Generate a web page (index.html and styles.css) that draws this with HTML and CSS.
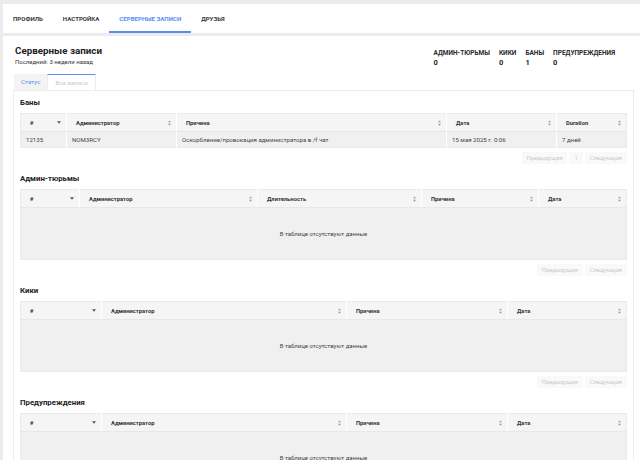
FILE: index.html
```html
<!DOCTYPE html>
<html lang="ru">
<head>
    <meta charset="UTF-8">
    <meta name="viewport" content="width=device-width, initial-scale=1.0">
    <title>Серверные записи</title>
    <link rel="stylesheet" href="styles.css">
</head>
<body>
    <nav class="nav">
        <a href="#">ПРОФИЛЬ</a>
        <a href="#">НАСТРОЙКА</a>
        <a href="#" class="active">СЕРВЕРНЫЕ ЗАПИСИ</a>
        <a href="#">ДРУЗЬЯ</a>
    </nav>

    <div class="card">
        <div class="head">
            <div class="title">
                <h1>Серверные записи</h1>
                <p>Последний: 3 недели назад</p>
            </div>
            <div class="stats">
                <div class="stat"><span class="stat-label">АДМИН-ТЮРЬМЫ</span><span class="stat-value">0</span></div>
                <div class="stat"><span class="stat-label">КИКИ</span><span class="stat-value">0</span></div>
                <div class="stat"><span class="stat-label">БАНЫ</span><span class="stat-value">1</span></div>
                <div class="stat"><span class="stat-label">ПРЕДУПРЕЖДЕНИЯ</span><span class="stat-value">0</span></div>
            </div>
        </div>

        <div class="tabs">
            <div class="tab tab-status">Статус</div>
            <div class="tab tab-all">Все записи</div>
        </div>

        <div class="panel">
            <section class="section">
                <h2>Баны</h2>
                <table class="grid bans">
                    <colgroup><col><col><col><col><col></colgroup>
                    <thead>
                        <tr>
                            <th><div class="th"><span>#</span><svg class="desc" viewBox="0 0 5 3"><path d="M0 0H5L2.5 3z"/></svg></div></th>
                            <th><div class="th"><span>Администратор</span><svg class="sort" viewBox="0 0 4 7"><path d="M2 0L4 2.6H0zM2 7L0 4.4H4z"/></svg></div></th>
                            <th><div class="th"><span>Причина</span><svg class="sort" viewBox="0 0 4 7"><path d="M2 0L4 2.6H0zM2 7L0 4.4H4z"/></svg></div></th>
                            <th><div class="th"><span>Дата</span><svg class="sort" viewBox="0 0 4 7"><path d="M2 0L4 2.6H0zM2 7L0 4.4H4z"/></svg></div></th>
                            <th><div class="th"><span>Duration</span><svg class="sort" viewBox="0 0 4 7"><path d="M2 0L4 2.6H0zM2 7L0 4.4H4z"/></svg></div></th>
                        </tr>
                    </thead>
                    <tbody>
                        <tr>
                            <td>12135</td>
                            <td>NOM3RCY</td>
                            <td>Оскорбление/провокация администратора в /f чат</td>
                            <td>15 мая 2025 г. 0:06</td>
                            <td>7 дней</td>
                        </tr>
                    </tbody>
                </table>
                <div class="pager">
                    <span>Предыдущая</span>
                    <span>1</span>
                    <span>Следующая</span>
                </div>
            </section>

            <section class="section">
                <h2>Админ-тюрьмы</h2>
                <table class="grid jails">
                    <colgroup><col><col><col><col><col></colgroup>
                    <thead>
                        <tr>
                            <th><div class="th"><span>#</span><svg class="desc" viewBox="0 0 5 3"><path d="M0 0H5L2.5 3z"/></svg></div></th>
                            <th><div class="th"><span>Администратор</span><svg class="sort" viewBox="0 0 4 7"><path d="M2 0L4 2.6H0zM2 7L0 4.4H4z"/></svg></div></th>
                            <th><div class="th"><span>Длительность</span><svg class="sort" viewBox="0 0 4 7"><path d="M2 0L4 2.6H0zM2 7L0 4.4H4z"/></svg></div></th>
                            <th><div class="th"><span>Причина</span><svg class="sort" viewBox="0 0 4 7"><path d="M2 0L4 2.6H0zM2 7L0 4.4H4z"/></svg></div></th>
                            <th><div class="th"><span>Дата</span><svg class="sort" viewBox="0 0 4 7"><path d="M2 0L4 2.6H0zM2 7L0 4.4H4z"/></svg></div></th>
                        </tr>
                    </thead>
                    <tbody>
                        <tr><td class="empty" colspan="5">В таблице отсутствуют данные</td></tr>
                    </tbody>
                </table>
                <div class="pager">
                    <span>Предыдущая</span>
                    <span>Следующая</span>
                </div>
            </section>

            <section class="section">
                <h2>Кики</h2>
                <table class="grid kicks">
                    <colgroup><col><col><col><col></colgroup>
                    <thead>
                        <tr>
                            <th><div class="th"><span>#</span><svg class="desc" viewBox="0 0 5 3"><path d="M0 0H5L2.5 3z"/></svg></div></th>
                            <th><div class="th"><span>Администратор</span><svg class="sort" viewBox="0 0 4 7"><path d="M2 0L4 2.6H0zM2 7L0 4.4H4z"/></svg></div></th>
                            <th><div class="th"><span>Причина</span><svg class="sort" viewBox="0 0 4 7"><path d="M2 0L4 2.6H0zM2 7L0 4.4H4z"/></svg></div></th>
                            <th><div class="th"><span>Дата</span><svg class="sort" viewBox="0 0 4 7"><path d="M2 0L4 2.6H0zM2 7L0 4.4H4z"/></svg></div></th>
                        </tr>
                    </thead>
                    <tbody>
                        <tr><td class="empty" colspan="4">В таблице отсутствуют данные</td></tr>
                    </tbody>
                </table>
                <div class="pager">
                    <span>Предыдущая</span>
                    <span>Следующая</span>
                </div>
            </section>

            <section class="section">
                <h2>Предупреждения</h2>
                <table class="grid kicks">
                    <colgroup><col><col><col><col></colgroup>
                    <thead>
                        <tr>
                            <th><div class="th"><span>#</span><svg class="desc" viewBox="0 0 5 3"><path d="M0 0H5L2.5 3z"/></svg></div></th>
                            <th><div class="th"><span>Администратор</span><svg class="sort" viewBox="0 0 4 7"><path d="M2 0L4 2.6H0zM2 7L0 4.4H4z"/></svg></div></th>
                            <th><div class="th"><span>Причина</span><svg class="sort" viewBox="0 0 4 7"><path d="M2 0L4 2.6H0zM2 7L0 4.4H4z"/></svg></div></th>
                            <th><div class="th"><span>Дата</span><svg class="sort" viewBox="0 0 4 7"><path d="M2 0L4 2.6H0zM2 7L0 4.4H4z"/></svg></div></th>
                        </tr>
                    </thead>
                    <tbody>
                        <tr><td class="empty" colspan="4">В таблице отсутствуют данные</td></tr>
                    </tbody>
                </table>
                <div class="pager">
                    <span>Предыдущая</span>
                    <span>Следующая</span>
                </div>
            </section>
        </div>
    </div>
</body>
</html>
```

FILE: styles.css
```css
* {
    box-sizing: border-box;
}
html, body {
    margin: 0;
}
body {
    font-family: Roboto, "Liberation Sans", sans-serif;
    background-color: #eaecef;
    padding: 4px 0 0 3px;
    color: #333;
    overflow: hidden;
}

/* top navigation */
.nav {
    display: flex;
    height: 29px;
    background-color: #fff;
}
.nav a {
    display: flex;
    align-items: center;
    padding: 2px 10px 0;
    font-size: 6.1px;
    font-weight: 700;
    color: #3a3a3a;
    text-decoration: none;
    border-bottom: 2px solid transparent;
}
.nav a.active {
    color: #5b8def;
    border-bottom-color: #5b8def;
}

.card {
    margin-top: 3px;
    background-color: #fff;
    padding: 8px 6px 20px 10px;
}
.head {
    display: flex;
    justify-content: space-between;
    align-items: flex-start;
}
.title h1 {
    margin: 0 0 0 2px;
    font-size: 9.8px;
    line-height: 14px;
    font-weight: 700;
    color: #222;
}
.title p {
    margin: 0 0 0 2px;
    font-size: 6px;
    line-height: 8px;
    color: #333;
}
.stats {
    display: flex;
    gap: 9px;
    padding: 5px 19px 0 0;
}
.stat {
    display: flex;
    flex-direction: column;
}
.stat-label {
    font-size: 6.5px;
    line-height: 9px;
    font-weight: 700;
    color: #2a2a2a;
}
.stat-value {
    font-size: 7.5px;
    line-height: 9px;
    font-weight: 700;
    color: #222;
}

/* tabs */
.tabs {
    display: flex;
    margin: 7px 0 0 1px;
}
.tab {
    height: 16px;
    padding: 0 7px;
    display: flex;
    align-items: center;
    font-size: 6.2px;
}
.tab-status {
    background-color: #f3f3f3;
    color: #5b8def;
}
.tab-all {
    color: #c9c9c9;
    background-color: #fff;
    border: 1px solid #ececec;
    border-top-color: #5b8def;
    border-bottom: none;
}

.panel {
    border: 1px solid #ececec;
    padding: 0 6px;
}
.section h2 {
    margin: 9px 0 5px;
    font-size: 7.8px;
    line-height: 11px;
    font-weight: 700;
    color: #222;
}
.section:first-child h2 {
    margin-top: 6px;
}

/* data tables */
.grid {
    width: 100%;
    border-collapse: collapse;
    table-layout: fixed;
    font-size: 6.1px;
    border: 1px solid #ebebeb;
}
.grid th {
    height: 18px;
    padding: 0 5px 0 9px;
    background-color: #f5f5f5;
    text-align: left;
    font-size: 5.8px;
    font-weight: 700;
    color: #333;
    border-left: 1px solid #fff;
    border-bottom: 1px solid #e8e8e8;
}
.grid th:first-child,
.grid td:first-child {
    border-left: none;
}
.th {
    display: flex;
    align-items: center;
    justify-content: space-between;
}
.sort {
    width: 3px;
    height: 6px;
    fill: #9a9a9a;
}
.desc {
    width: 4px;
    height: 3px;
    fill: #555;
}
.grid td {
    height: 16px;
    padding: 0 5px;
    background-color: #f0f0f0;
    color: #444;
    border-left: 1px solid #fff;
    white-space: nowrap;
}
.grid td.empty {
    height: 52px;
    text-align: center;
    font-size: 6px;
    background-color: #f0f0f0;
}

.bans col:nth-child(1) { width: 46px; }
.bans col:nth-child(2) { width: 110px; }
.bans col:nth-child(3) { width: 270px; }
.bans col:nth-child(4) { width: 110px; }

.jails col:nth-child(1) { width: 59px; }
.jails col:nth-child(2) { width: 178px; }
.jails col:nth-child(3) { width: 164px; }
.jails col:nth-child(4) { width: 117px; }

.kicks col:nth-child(1) { width: 81px; }
.kicks col:nth-child(2) { width: 245px; }
.kicks col:nth-child(3) { width: 161px; }

.pager {
    display: flex;
    justify-content: flex-end;
    gap: 2px;
    margin-top: 4px;
}
.pager span {
    padding: 0 5px;
    background-color: #f9f9f9;
    color: #c9c9c9;
    font-size: 5.8px;
    line-height: 12px;
}
```
